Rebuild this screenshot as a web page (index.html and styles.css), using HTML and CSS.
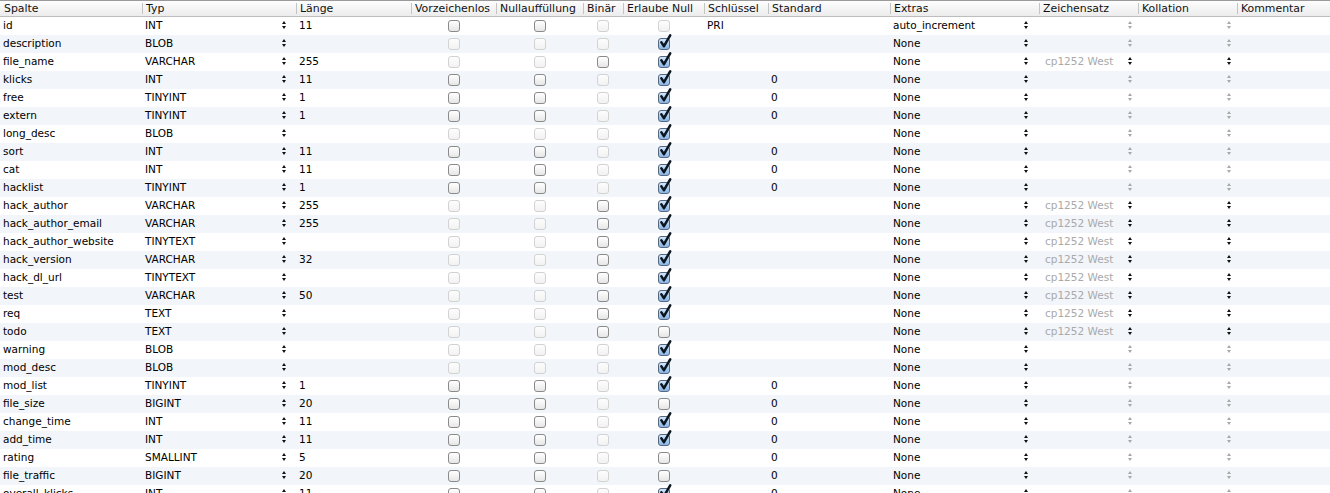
FILE: index.html
```html
<!DOCTYPE html>
<html>
<head>
<meta charset="utf-8">
<link rel="stylesheet" href="styles.css">
</head>
<body>
<div class="grid">
  <div class="row head">
    <div class="h first">Spalte</div>
    <div class="h">Typ</div>
    <div class="h">Länge</div>
    <div class="h">Vorzeichenlos</div>
    <div class="h">Nullauffüllung</div>
    <div class="h">Binär</div>
    <div class="h">Erlaube Null</div>
    <div class="h">Schlüssel</div>
    <div class="h">Standard</div>
    <div class="h">Extras</div>
    <div class="h">Zeichensatz</div>
    <div class="h">Kollation</div>
    <div class="h">Kommentar</div>
  </div>
  <div id="rows"></div>
</div>
<script src="app.js"></script>
</body>
</html>
```

FILE: app.js
```js
// name, type, length, unsigned, zerofill, binary, nullState, key, default, extra, charset
// checkbox codes: e = enabled, d = disabled, c = checked
var data = [
  ["id","INT","11","e","e","d","d","PRI","","auto_increment",""],
  ["description","BLOB","","d","d","d","c","","","None",""],
  ["file_name","VARCHAR","255","d","d","e","c","","","None","cp1252 West"],
  ["klicks","INT","11","e","e","d","c","","0","None",""],
  ["free","TINYINT","1","e","e","d","c","","0","None",""],
  ["extern","TINYINT","1","e","e","d","c","","0","None",""],
  ["long_desc","BLOB","","d","d","d","c","","","None",""],
  ["sort","INT","11","e","e","d","c","","0","None",""],
  ["cat","INT","11","e","e","d","c","","0","None",""],
  ["hacklist","TINYINT","1","e","e","d","c","","0","None",""],
  ["hack_author","VARCHAR","255","d","d","e","c","","","None","cp1252 West"],
  ["hack_author_email","VARCHAR","255","d","d","e","c","","","None","cp1252 West"],
  ["hack_author_website","TINYTEXT","","d","d","e","c","","","None","cp1252 West"],
  ["hack_version","VARCHAR","32","d","d","e","c","","","None","cp1252 West"],
  ["hack_dl_url","TINYTEXT","","d","d","e","c","","","None","cp1252 West"],
  ["test","VARCHAR","50","d","d","e","c","","","None","cp1252 West"],
  ["req","TEXT","","d","d","e","c","","","None","cp1252 West"],
  ["todo","TEXT","","d","d","e","e","","","None","cp1252 West"],
  ["warning","BLOB","","d","d","d","c","","","None",""],
  ["mod_desc","BLOB","","d","d","d","c","","","None",""],
  ["mod_list","TINYINT","1","e","e","d","c","","0","None",""],
  ["file_size","BIGINT","20","e","e","d","e","","0","None",""],
  ["change_time","INT","11","e","e","d","c","","0","None",""],
  ["add_time","INT","11","e","e","d","c","","0","None",""],
  ["rating","SMALLINT","5","e","e","d","e","","0","None",""],
  ["file_traffic","BIGINT","20","e","e","d","e","","0","None",""],
  ["overall_klicks","INT","11","e","e","d","c","","0","None",""]
];

function cb(s) {
  if (s === "c") {
    return '<span class="cb on"><svg class="tick" viewBox="0 0 14 16" width="14" height="16"><path d="M3.4 8.4 L6 12.2 L12.2 1.4" fill="none" stroke="#0b1520" stroke-width="2.5" stroke-linecap="round" stroke-linejoin="round"/></svg></span>';
  }
  return '<span class="cb' + (s === "d" ? " dis" : "") + '"></span>';
}
function st(dis) { return '<span class="st' + (dis ? " dis" : "") + '"></span>'; }

var html = "";
data.forEach(function (r, i) {
  var hasCs = r[10] !== "";
  html += '<div class="row ' + (i % 2 ? "alt" : "") + '">' +
    '<div class="c">' + r[0] + '</div>' +
    '<div class="c pop typ"><span>' + r[1] + '</span>' + st(false) + '</div>' +
    '<div class="c">' + r[2] + '</div>' +
    '<div class="ck">' + cb(r[3]) + '</div>' +
    '<div class="ck">' + cb(r[4]) + '</div>' +
    '<div class="ck">' + cb(r[5]) + '</div>' +
    '<div class="ck">' + cb(r[6]) + '</div>' +
    '<div class="c">' + r[7] + '</div>' +
    '<div class="c">' + r[8] + '</div>' +
    '<div class="c pop ext"><span>' + r[9] + '</span>' + st(false) + '</div>' +
    '<div class="c pop cs"><span class="grey">' + r[10] + '</span>' + st(!hasCs) + '</div>' +
    '<div class="c pop cs"><span></span>' + st(!hasCs) + '</div>' +
    '<div class="c"></div>' +
    '</div>';
});
document.getElementById("rows").innerHTML = html;
```

FILE: styles.css
```css
html, body {
  margin: 0;
  padding: 0;
  background: #fff;
  overflow: hidden;
}
body {
  font-family: "DejaVu Sans", "Liberation Sans", sans-serif;
  font-size: 10.5px;
  color: #000;
}
.row {
  display: grid;
  grid-template-columns: 142px 154px 115px 85px 87px 40px 81px 64px 122px 149px 99px 99px 93px;
  height: 18px;
}
.row.alt { background: #f2f5fa; }
.row.head {
  border-top: 1px solid #9a9a9a;
  border-bottom: 1px solid #bdbdbd;
  background: linear-gradient(#fdfdfd, #ececec);
  box-sizing: content-box;
  height: 15px;
}
.h {
  display: flex;
  align-items: center;
  padding-left: 4px;
  padding-bottom: 1px;
  font-size: 10.9px;
  color: #111;
  white-space: nowrap;
  overflow: hidden;
  background: linear-gradient(#c4c4c4, #c4c4c4) no-repeat 0 2px / 1px 11px;
}
.h.first { background: none; padding-left: 4px; }
.c {
  display: flex;
  align-items: center;
  padding-left: 3px;
  padding-bottom: 2px;
  white-space: nowrap;
  overflow: hidden;
}
.pop { justify-content: space-between; }
.typ { padding-right: 10px; }
.ext { padding-right: 11px; }
.cs { padding-left: 6px; padding-right: 6px; }
.grey { color: #a9a9a9; }
.ck {
  display: flex;
  align-items: center;
  justify-content: center;
}
.cb {
  position: relative;
  display: block;
  width: 10px;
  height: 10px;
  border: 1px solid #8a8a8a;
  border-radius: 3px;
  background: linear-gradient(#ffffff, #e6e6e6);
}
.cb.dis {
  border-color: #d2d2d2;
  background: linear-gradient(#fdfdfd, #f2f2f2);
}
.cb.on {
  border-color: #56687e;
  background: linear-gradient(#d2e6fb, #88b5e6);
}
.tick {
  position: absolute;
  left: -1px;
  top: -5px;
}
.st {
  display: flex;
  flex-direction: column;
  align-items: center;
  gap: 2px;
  width: 5px;
}
.st::before, .st::after {
  content: "";
  width: 0;
  height: 0;
  border-left: 2.5px solid transparent;
  border-right: 2.5px solid transparent;
}
.st::before { border-bottom: 3px solid #111; }
.st::after { border-top: 3px solid #111; }
.st.dis::before { border-bottom-color: #a8a8a8; }
.st.dis::after { border-top-color: #a8a8a8; }
```
